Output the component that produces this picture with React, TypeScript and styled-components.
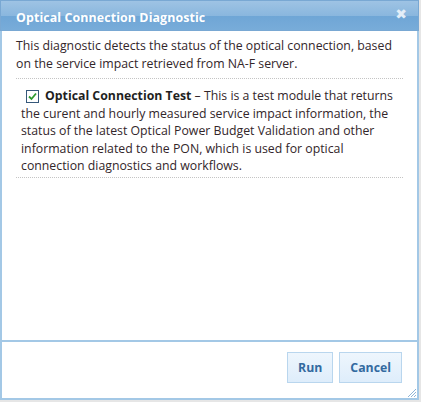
import React from "react";
import styled, { createGlobalStyle } from "styled-components";

const Global = createGlobalStyle`
  html, body { margin: 0; padding: 0; background: #e6e6e6; }
  body { font-family: "Open Sans", "Noto Sans", sans-serif; }
`;

const Dialog = styled.div`
  width: 419px;
  height: 400px;
  box-sizing: border-box;
  border: 2px solid #a3c8e6;
  border-top: none;
  background: #fff;
  display: flex;
  flex-direction: column;
`;

const Header = styled.div`
  height: 31px;
  margin: 0 -2px;
  box-sizing: border-box;
  border: 1px solid #79a8d3;
  background: linear-gradient(to bottom, #9ec3e4 0%, #8ab7de 50%, #6fa6d6 52%, #78acd9 100%);
  display: flex;
  align-items: center;
  justify-content: space-between;
  padding: 3px 11px 0 15px;
`;

const Title = styled.div`
  color: #fff;
  font-weight: 700;
  font-size: 12.4px;
  letter-spacing: 0.1px;
`;

const Close = styled.div`
  color: #e3eef8;
  font-size: 14px;
  font-weight: 700;
  line-height: 1;
  font-family: "DejaVu Sans", sans-serif;
  margin-top: -6px;
`;

const Body = styled.div`
  flex: 1;
  padding: 6px 14px 0 14px;
  color: #33262a;
  font-size: 12.3px;
  line-height: 18px;
`;

const Intro = styled.p`
  margin: 0;
  padding-bottom: 5px;
  border-bottom: 1px dotted #c4c4c4;
`;

const Item = styled.div`
  padding: 8px 0 2px 5px;
  border-bottom: 1px dotted #c4c4c4;
  line-height: 17.5px;
`;

const Check = styled.span`
  display: inline-flex;
  align-items: center;
  justify-content: center;
  width: 11px;
  height: 11px;
  border: 1px solid #36587a;
  background: #fff;
  vertical-align: -1px;
  margin: 0 6px 0 5px;
`;

const Strong = styled.b`
  font-weight: 700;
  color: #1f1f1f;
`;

const Footer = styled.div`
  height: 58px;
  box-sizing: border-box;
  border-top: 2px solid #a3c8e6;
  display: flex;
  justify-content: flex-end;
  align-items: flex-start;
  gap: 6px;
  padding: 10px 15px 0 0;
  position: relative;
`;

const Button = styled.button`
  height: 31px;
  padding: 0 10px;
  border: 1px solid #b9d6ee;
  background: linear-gradient(to bottom, #eef6fd, #deedfb);
  color: #336aa0;
  font-family: "Open Sans", sans-serif;
  font-weight: 700;
  font-size: 12.3px;
`;

const Grip = styled.svg`
  position: absolute;
  right: 0;
  bottom: 0;
`;

export default function App() {
  return (
    <>
      <Global />
      <Dialog>
        <Header>
          <Title>Optical Connection Diagnostic</Title>
          <Close>✖</Close>
        </Header>
        <Body>
          <Intro>
            This diagnostic detects the status of the optical connection, based on the service
            impact retrieved from NA-F server.
          </Intro>
          <Item>
            <Check>
              <svg width="9" height="9" viewBox="0 0 9 9">
                <path d="M1 4.5 L3.5 7 L8 1.5" fill="none" stroke="#2e9b2e" strokeWidth="1.8" />
              </svg>
            </Check>
            <Strong>Optical Connection Test</Strong> – This is a test module that returns the curent
            and hourly measured service impact information, the status of the latest Optical Power
            Budget Validation and other information related to the PON, which is used for optical
            connection diagnostics and workflows.
          </Item>
        </Body>
        <Footer>
          <Button>Run</Button>
          <Button>Cancel</Button>
          <Grip width="12" height="12" viewBox="0 0 12 12">
            <path d="M11 3 L3 11 M11 6 L6 11 M11 9 L9 11" stroke="#8fb5d8" strokeWidth="1" />
          </Grip>
        </Footer>
      </Dialog>
    </>
  );
}
